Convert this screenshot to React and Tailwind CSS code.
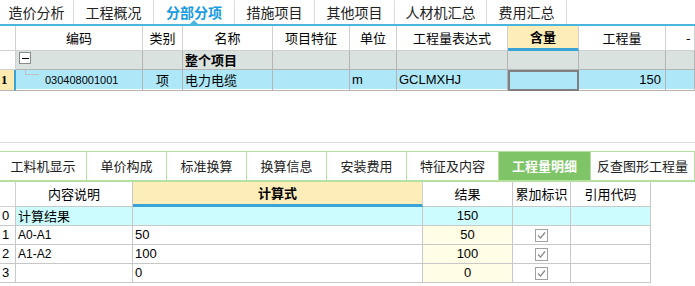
import React from 'react';

const font = { fontFamily: '"Noto Sans CJK SC", "Liberation Sans", sans-serif' };
const num = { fontFamily: '"Liberation Sans", "Noto Sans CJK SC", sans-serif' };

const topTabs = [
  { label: '造价分析', w: 'w-[74px]' },
  { label: '工程概况', w: 'w-[80px]' },
  { label: '分部分项', w: 'w-[81px]', active: true },
  { label: '措施项目', w: 'w-[80px]' },
  { label: '其他项目', w: 'w-[80px]' },
  { label: '人材机汇总', w: 'w-[92px]' },
  { label: '费用汇总', w: 'w-[80px]' },
];

const subTabs = [
  { label: '工料机显示', w: 'w-[87px]' },
  { label: '单价构成', w: 'w-[80px]' },
  { label: '标准换算', w: 'w-[80px]' },
  { label: '换算信息', w: 'w-[80px]' },
  { label: '安装费用', w: 'w-[80px]' },
  { label: '特征及内容', w: 'w-[92px]' },
  { label: '工程量明细', w: 'w-[92px]', active: true },
  { label: '反查图形工程量', w: 'w-[104px]' },
];

const topCols = 'grid-cols-[16px_127px_40px_90px_77px_47px_111px_71px_87px_29px]';
const lowCols = 'grid-cols-[16px_117px_290px_90px_58px_80px]';

function Check() {
  return (
    <span className="inline-flex w-[13px] h-[13px] border border-[#a0a0a0] bg-white items-center justify-center">
      <svg width="9" height="9" viewBox="0 0 9 9">
        <path d="M1 4.5 L3.5 7 L8 1.5" fill="none" stroke="#8a8a8a" strokeWidth="1.3" />
      </svg>
    </span>
  );
}

export default function App() {
  const cell = 'border-r border-b border-[#b4b4b4] flex items-center text-[13px] text-black h-full overflow-hidden whitespace-nowrap';
  const lcell = 'border-r border-b border-[#c8c8c8] flex items-center text-[13px] text-black h-full overflow-hidden whitespace-nowrap';

  const lowRows = [
    { n: '0', desc: '计算结果', formula: '', result: '150', check: false, first: true },
    { n: '1', desc: 'A0-A1', formula: '50', result: '50', check: true },
    { n: '2', desc: 'A1-A2', formula: '100', result: '100', check: true },
    { n: '3', desc: '', formula: '0', result: '0', check: true },
  ];

  return (
    <div className="w-[695px] h-[286px] bg-white overflow-hidden relative" style={font}>
      {/* top tabs */}
      <div className="flex h-[24px]">
        {topTabs.map((t) => (
          <div
            key={t.label}
            className={`${t.w} relative shrink-0 flex items-center justify-center border-r border-[#dcdcdc] text-[14px] ${t.active ? 'text-[#1a9be0] font-bold' : 'text-[#222]'}`}
          >
            {t.label}
            {t.active && (
              <span className="absolute bottom-0 left-1/2 -translate-x-1/2 w-0 h-0 border-l-[4px] border-r-[4px] border-b-[4px] border-l-transparent border-r-transparent border-b-[#4ab6e0]" />
            )}
          </div>
        ))}
      </div>
      <div className="h-[2px] bg-[#4ab6e0]" />

      {/* top grid header */}
      <div className={`grid ${topCols} h-[25px]`}>
        <div className="border-r border-b border-[#d0d0d0]" />
        <div className={`${cell} justify-center border-[#d0d0d0]`}>编码</div>
        <div className={`${cell} justify-center border-[#d0d0d0]`}>类别</div>
        <div className={`${cell} justify-center border-[#d0d0d0]`}>名称</div>
        <div className={`${cell} justify-center border-[#d0d0d0]`}>项目特征</div>
        <div className={`${cell} justify-center border-[#d0d0d0]`}>单位</div>
        <div className={`${cell} justify-center border-[#d0d0d0]`}>工程量表达式</div>
        <div className="border-r border-[#d0d0d0] bg-[#fdedb8] flex items-center justify-center text-[13px] font-bold border-b-[3px] border-b-[#3aa4d6]">含量</div>
        <div className={`${cell} justify-center border-[#d0d0d0]`}>工程量</div>
        <div className={`${cell} pl-[20px] border-[#d0d0d0]`}>-</div>
      </div>

      {/* group row */}
      <div className={`grid ${topCols} h-[19px] bg-[#d9e2de]`}>
        <div className="bg-white border-r border-b border-[#d0d0d0]" />
        <div className={`${cell} relative`}>
          <span className="absolute left-[3px] top-[1px] w-[12px] h-[12px] border border-[#8a8a8a] bg-white flex items-center justify-center">
            <span className="w-[7px] h-[1px] bg-black" />
          </span>
        </div>
        <div className={cell} />
        <div className={`${cell} font-bold pl-[2px]`}>整个项目</div>
        <div className={cell} />
        <div className={cell} />
        <div className={cell} />
        <div className={cell} />
        <div className={cell} />
        <div className={cell} />
      </div>

      {/* data row */}
      <div className={`grid ${topCols} h-[19px] bg-[#aee8f8]`}>
        <div className="bg-[#fdeab0] border-r-2 border-r-[#3aa4d6] border-b border-b-[#b4b4b4] flex items-center pl-[1px] text-[13px] font-bold" style={{ fontFamily: '"Liberation Serif", serif' }}>1</div>
        <div className={`${cell} relative pl-[29px]`}>
          <span className="absolute left-[9px] top-[-6px] w-[14px] h-[11px] border-l border-b border-[#c0c0c0]" />
          <span style={num} className="text-[11px]">030408001001</span>
        </div>
        <div className={`${cell} justify-center`}>项</div>
        <div className={`${cell} pl-[2px]`}>电力电缆</div>
        <div className={cell} />
        <div className={`${cell} pl-[2px] text-[11px]`} style={num}>m</div>
        <div className={`${cell} pl-[2px] text-[11px]`} style={num}>GCLMXHJ</div>
        <div className="border-2 border-[#808080] h-full" />
        <div className={`${cell} justify-end pr-[4px] text-[11px]`} style={num}>150</div>
        <div className={cell} />
      </div>

      {/* empty space */}
      <div className="h-[54px] border-b border-[#dcdcdc]" />
      <div className="h-[8px]" />

      {/* sub tabs */}
      <div className="flex h-[31px] border-t border-b-2 border-[#b5e0a0]">
        {subTabs.map((t) => (
          <div
            key={t.label}
            className={`${t.w} shrink-0 flex items-center justify-center border-r border-[#b5e0a0] text-[13px] ${t.active ? 'bg-[#80c468] text-white font-bold' : 'text-[#222]'}`}
          >
            {t.label}
          </div>
        ))}
      </div>

      {/* lower grid header */}
      <div className={`grid ${lowCols} h-[25px]`}>
        <div className="border-r border-b border-[#d0d0d0]" />
        <div className={`${lcell} justify-center`}>内容说明</div>
        <div className="border-r border-[#d0d0d0] bg-[#fdedb8] flex items-center justify-center text-[13px] font-bold border-b-[3px] border-b-[#3aa4d6]">计算式</div>
        <div className={`${lcell} justify-center`}>结果</div>
        <div className={`${lcell} justify-center`}>累加标识</div>
        <div className={`${lcell} justify-center`}>引用代码</div>
      </div>

      {lowRows.map((r) => (
        <div key={r.n} className={`grid ${lowCols} h-[19px]`}>
          <div className={`${lcell} pl-[2px] text-[12px]`} style={num}>{r.n}</div>
          <div className={`${lcell} pl-[2px] ${r.first ? 'bg-[#ccfcfd]' : ''}`} style={r.first ? undefined : num}>
            <span className={r.first ? '' : 'text-[12px]'}>{r.desc}</span>
          </div>
          <div className={`${lcell} pl-[2px] text-[12px] ${r.first ? 'bg-[#ccfcfd]' : ''}`} style={num}>{r.formula}</div>
          <div className={`${lcell} justify-center text-[12px] ${r.first ? 'bg-[#ccfcfd]' : 'bg-[#fffde6]'}`} style={num}>{r.result}</div>
          <div className={`${lcell} justify-center ${r.first ? 'bg-[#ccfcfd]' : ''}`}>{r.check && <Check />}</div>
          <div className={`${lcell} ${r.first ? 'bg-[#ccfcfd]' : ''}`} />
        </div>
      ))}
    </div>
  );
}
